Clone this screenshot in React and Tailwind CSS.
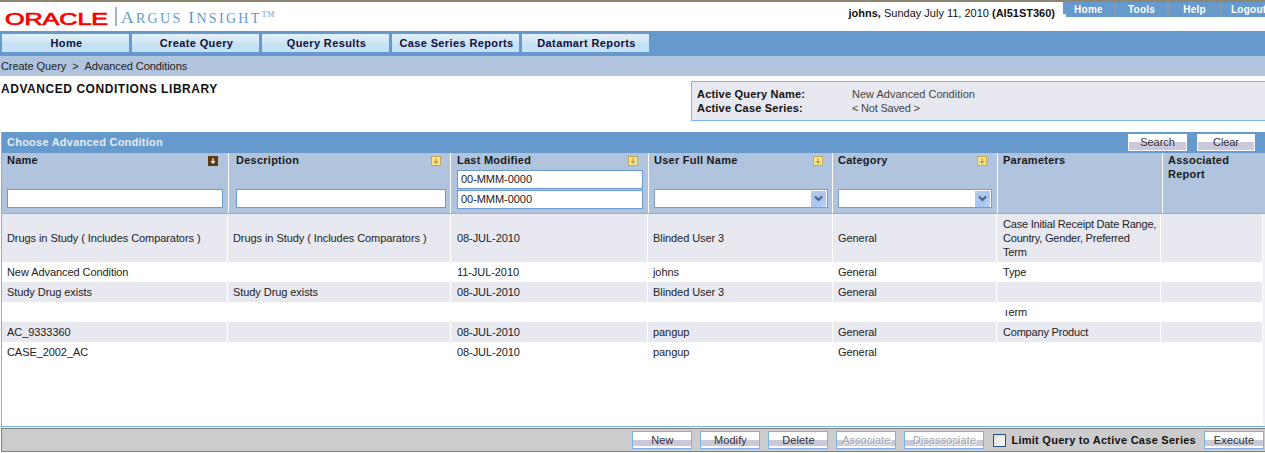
const headerCols = "grid grid-cols-[227px_222px_198px_184px_165px_165px_102px]";
const rowCols = "grid grid-cols-[226px_223px_197px_185px_164px_164px_101px]";

const rows = [
  {
    name: "Drugs in Study ( Includes Comparators )",
    description: "Drugs in Study ( Includes Comparators )",
    modified: "08-JUL-2010",
    user: "Blinded User 3",
    parameters: "Case Initial Receipt Date Range,\nCountry, Gender, Preferred\nTerm",
    height: "h-[48px]",
    shaded: true,
  },
  { name: "New Advanced Condition", description: "", modified: "11-JUL-2010", user: "johns", parameters: "Type", height: "h-[20px]" },
  { name: "Study Drug exists", description: "Study Drug exists", modified: "08-JUL-2010", user: "Blinded User 3", parameters: "", height: "h-[20px]", shaded: true },
  { clipped: true, height: "h-[20px]" },
  { name: "AC_9333360", description: "", modified: "08-JUL-2010", user: "pangup", parameters: "Company Product", height: "h-[20px]", shaded: true },
  { name: "CASE_2002_AC", description: "", modified: "08-JUL-2010", user: "pangup", parameters: "", height: "h-[20px]" },
];

function SortIcon({ active }) {
  return (
    <svg width="10" height="10" viewBox="0 0 10 10" className="shrink-0">
      <rect x="0.5" y="0.5" width="9" height="9" fill={active ? "#5c3a14" : "#f6e48c"} stroke={active ? "#5c3a14" : "#c4a95a"} />
      <path d="M5 2v5M3 5l2 2.2L7 5" fill="none" stroke={active ? "#ffffff" : "#b89a3c"} strokeWidth="1.1" />
    </svg>
  );
}

function TextBox({ value = "", className = "" }) {
  return (
    <div className={`h-[19px] border border-[#6b9bd0] bg-white pl-[3px] text-[11px] leading-[17px] tracking-[-0.05px] text-[#222] ${className}`}>
      {value}
    </div>
  );
}

function SelectBox({ className = "" }) {
  return (
    <div className={`flex h-[19px] items-center justify-end border border-[#7f9db9] bg-white pr-px ${className}`}>
      <div className="flex h-[16px] w-[15px] items-center justify-center bg-[linear-gradient(135deg,#b9c9e0,#a9c6f0_60%,#b6d8f8)]">
        <svg width="9" height="7" viewBox="0 0 9 7">
          <path d="M1 1.5l3.5 3.5L8 1.5" fill="none" stroke="#4d6185" strokeWidth="2" />
        </svg>
      </div>
    </div>
  );
}

function HeaderCell({ title, sort, active, pad = "pl-[5px] pr-[5px]", last, children }) {
  return (
    <div className={`flex flex-col ${pad} ${last ? "" : "border-r border-white"}`}>
      <div className="flex h-[14px] items-start justify-between text-[11px] leading-[14px] font-bold tracking-[0.25px] text-[#1a1a1a]">
        <span>{title}</span>
        {sort && <span className="mt-[3px] mr-[5px]"><SortIcon active={active} /></span>}
      </div>
      {children}
    </div>
  );
}

function Button({ children, width = "w-[60px]", disabled }) {
  return (
    <div
      className={`${width} flex h-[18px] items-center justify-center border border-[#7eb0e4] bg-[linear-gradient(#ffffff_0,#ffffff_50%,#cbc8da_50%,#cbc8da_88%,#ffffff_88%)] text-[11px] tracking-[0.1px] ${
        disabled ? "text-[#a8a8a8] [text-shadow:1px_1px_0_#ffffff]" : "text-[#333]"
      }`}
    >
      {children}
    </div>
  );
}

function NavButton({ children }) {
  return (
    <div className="flex h-[18px] w-[127px] items-center justify-center bg-[linear-gradient(#e2eff9,#d2e7f6_45%,#c4e1f5_55%,#c4e1f5)] pl-[2px] text-[11px] font-bold tracking-[0.38px] text-[#101040]">
      {children}
    </div>
  );
}

function TopTab({ children, width, notch, align = "justify-center" }) {
  return (
    <div className={`relative flex h-[15px] ${width} items-center ${align} bg-[#6699cc] text-[10px] font-bold tracking-[0.25px] text-white`}>
      {notch && <span className="absolute bottom-0 left-0 h-[3px] w-[3px] bg-white" />}
      {children}
    </div>
  );
}

export default function App() {
  return (
    <div className="h-[453px] w-[1265px] overflow-hidden bg-white font-['Liberation_Sans',Arial,sans-serif] text-[11px] tracking-[-0.07px] text-[#222]">
      <div className="h-[2px] bg-[#8c8672]" />

      {/* header */}
      <div className="flex h-[29px] justify-between">
        <div className="flex items-start pt-[5px] pl-[4px]">
          <svg width="106" height="20" viewBox="0 0 106 20" className="mt-[1px]">
            <text x="1" y="16.5" fontFamily="Liberation Sans" fontSize="17" fill="#f80000" stroke="#f80000" strokeWidth="0.7" textLength="103" lengthAdjust="spacingAndGlyphs">
              ORACLE
            </text>
          </svg>
          <div className="ml-[5px] h-[19px] w-[2px] bg-[#a9b2ba]" />
          <div className="ml-[4px] font-['Liberation_Serif',serif] tracking-normal text-[#6699cc]">
            <span className="text-[17.5px] leading-[20px] tracking-[2.3px]">A</span>
            <span className="text-[14px] leading-[20px] tracking-[2.3px]">RGUS </span>
            <span className="text-[17.5px] leading-[20px] tracking-[2.3px]">I</span>
            <span className="text-[14px] leading-[20px] tracking-[2.3px]">NSIGHT</span>
            <span className="relative -top-[6px] text-[8px] leading-none font-bold text-[#9dbbdc]">TM</span>
          </div>
        </div>
        <div className="flex items-start">
          <div className="pt-[4px] pr-[8px] text-[11px] leading-[14px] tracking-normal text-[#111]">
            <span className="font-bold">johns, </span>
            Sunday July 11, 2010 <span className="font-bold">(AI51ST360)</span>
          </div>
          <div className="flex gap-[2px] overflow-hidden bg-[#8a97a6]">
            <TopTab width="w-[51px]" notch>Home</TopTab>
            <TopTab width="w-[51px]">Tools</TopTab>
            <TopTab width="w-[51px]">Help</TopTab>
            <TopTab width="w-[43px] pl-[9px]" align="justify-start">Logout</TopTab>
          </div>
        </div>
      </div>

      {/* main nav */}
      <div className="flex h-[25px] items-start gap-[3px] bg-[#6699cc] pt-[3px] pl-[2px]">
        <NavButton>Home</NavButton>
        <NavButton>Create Query</NavButton>
        <NavButton>Query Results</NavButton>
        <NavButton>Case Series Reports</NavButton>
        <NavButton>Datamart Reports</NavButton>
      </div>

      {/* breadcrumb */}
      <div className="flex h-[20px] items-center bg-[#b0c4de] pl-[1px] text-[11px] text-[#222]">
        Create Query&nbsp;&nbsp;&gt;&nbsp;&nbsp;Advanced Conditions
      </div>

      {/* title + active query */}
      <div className="flex h-[56px] justify-between">
        <div className="pt-[6px] pl-[1px] text-[12px] leading-[14px] font-bold tracking-[0.55px] text-[#111]">ADVANCED CONDITIONS LIBRARY</div>
        <div className="mt-[5px] h-[40px] w-[574px] border-y border-l border-[#7db5ee] bg-[#e8e8f0] pt-[5px] pl-[5px] leading-[14px]">
          <div className="flex">
            <span className="w-[155px] font-bold tracking-[0.2px] text-[#111]">Active Query Name:</span>
            <span className="tracking-normal text-[#444]">New Advanced Condition</span>
          </div>
          <div className="flex">
            <span className="w-[155px] font-bold tracking-[0.2px] text-[#111]">Active Case Series:</span>
            <span className="tracking-[-0.2px] text-[#444]">&lt; Not Saved &gt;</span>
          </div>
        </div>
      </div>

      {/* library panel */}
      <div className="ml-px flex h-[295px] flex-col border-b border-l border-[#74b2f0]">
        <div className="flex h-[21px] items-start justify-between bg-[#6699cc] pt-[2px] pr-[10px] pl-[5px]">
          <span className="pt-px text-[11px] leading-[15px] font-bold tracking-[0.24px] text-[#e4ecf6]">Choose Advanced Condition</span>
          <div className="flex gap-[10px]">
            <div className="flex h-[17px] w-[59px] items-center justify-center border border-white bg-[linear-gradient(#ffffff_0,#ffffff_50%,#cbc8da_50%,#cbc8da_100%)] text-[11px] text-[#333]">Search</div>
            <div className="flex h-[17px] w-[58px] items-center justify-center border border-white bg-[linear-gradient(#ffffff_0,#ffffff_50%,#cbc8da_50%,#cbc8da_100%)] text-[11px] text-[#333]">Clear</div>
          </div>
        </div>

        <div className={`${headerCols} h-[61px] border-b border-[#7db5ee] bg-[#b0c4de]`}>
          <HeaderCell title="Name" sort active>
            <TextBox className="mt-[22px] h-[18px]" />
          </HeaderCell>
          <HeaderCell title="Description" sort pad="pl-[7px] pr-[4px]">
            <TextBox className="mt-[22px] h-[18px]" />
          </HeaderCell>
          <HeaderCell title="Last Modified" sort pad="pl-[6px] pr-[5px]">
            <TextBox value="00-MMM-0000" className="mt-[3px]" />
            <TextBox value="00-MMM-0000" className="mt-px" />
          </HeaderCell>
          <HeaderCell title="User Full Name" sort pad="pl-[5px] pr-[4px]">
            <SelectBox className="mt-[22px]" />
          </HeaderCell>
          <HeaderCell title="Category" sort>
            <SelectBox className="mt-[22px]" />
          </HeaderCell>
          <HeaderCell title="Parameters" />
          <HeaderCell title="Associated Report" last />
        </div>

        <div className="flex flex-1">
          <div className="flex flex-col">
            {rows.map((row, i) => {
              const bg = row.shaded ? "bg-[#e8e8f0]" : "bg-white";
              const cell = "flex items-center border-r border-white";
              if (row.clipped) {
                return (
                  <div key={i} className={`${rowCols} ${row.height} ${bg}`}>
                    <div className="col-start-6 h-[20px] overflow-hidden pt-[8px] pl-[6px]">
                      <div className="h-[8px] overflow-hidden">
                        <div className="-mt-[3px] leading-[11px]">Term</div>
                      </div>
                    </div>
                  </div>
                );
              }
              return (
                <div key={i} className={`${rowCols} ${row.height} ${bg} leading-[14px]`}>
                  <div className={`${cell} pl-[5px]`}>{row.name}</div>
                  <div className={`${cell} pl-[5px]`}>{row.description}</div>
                  <div className={`${cell} pl-[6px]`}>{row.modified}</div>
                  <div className={`${cell} pl-[5px]`}>{row.user}</div>
                  <div className={`${cell} pl-[5px]`}>General</div>
                  <div className={`${cell} pl-[6px] tracking-[-0.2px] whitespace-pre-line`}>{row.parameters}</div>
                  <div />
                </div>
              );
            })}
          </div>
          {/* leftover scrollbar track */}
          <div className="ml-px w-[2px] bg-[#f0f0f6]" />
        </div>
      </div>

      {/* action bar */}
      <div className="mt-px ml-px flex h-[24px] items-center justify-end gap-[8px] border border-r-0 border-[#808080] bg-[#cccccc] pr-px">
        <Button>New</Button>
        <Button>Modify</Button>
        <Button>Delete</Button>
        <Button disabled>Associate</Button>
        <Button width="w-[80px]" disabled>Disassociate</Button>
        <div className="ml-px flex items-center">
          <div className="h-[13px] w-[13px] border border-[#1c5180] bg-[linear-gradient(135deg,#dcdcd7,#ffffff)]" />
          <span className="ml-[5px] text-[11px] font-bold tracking-[0.27px] text-[#111]">Limit Query to Active Case Series</span>
        </div>
        <Button>Execute</Button>
      </div>
    </div>
  );
}
